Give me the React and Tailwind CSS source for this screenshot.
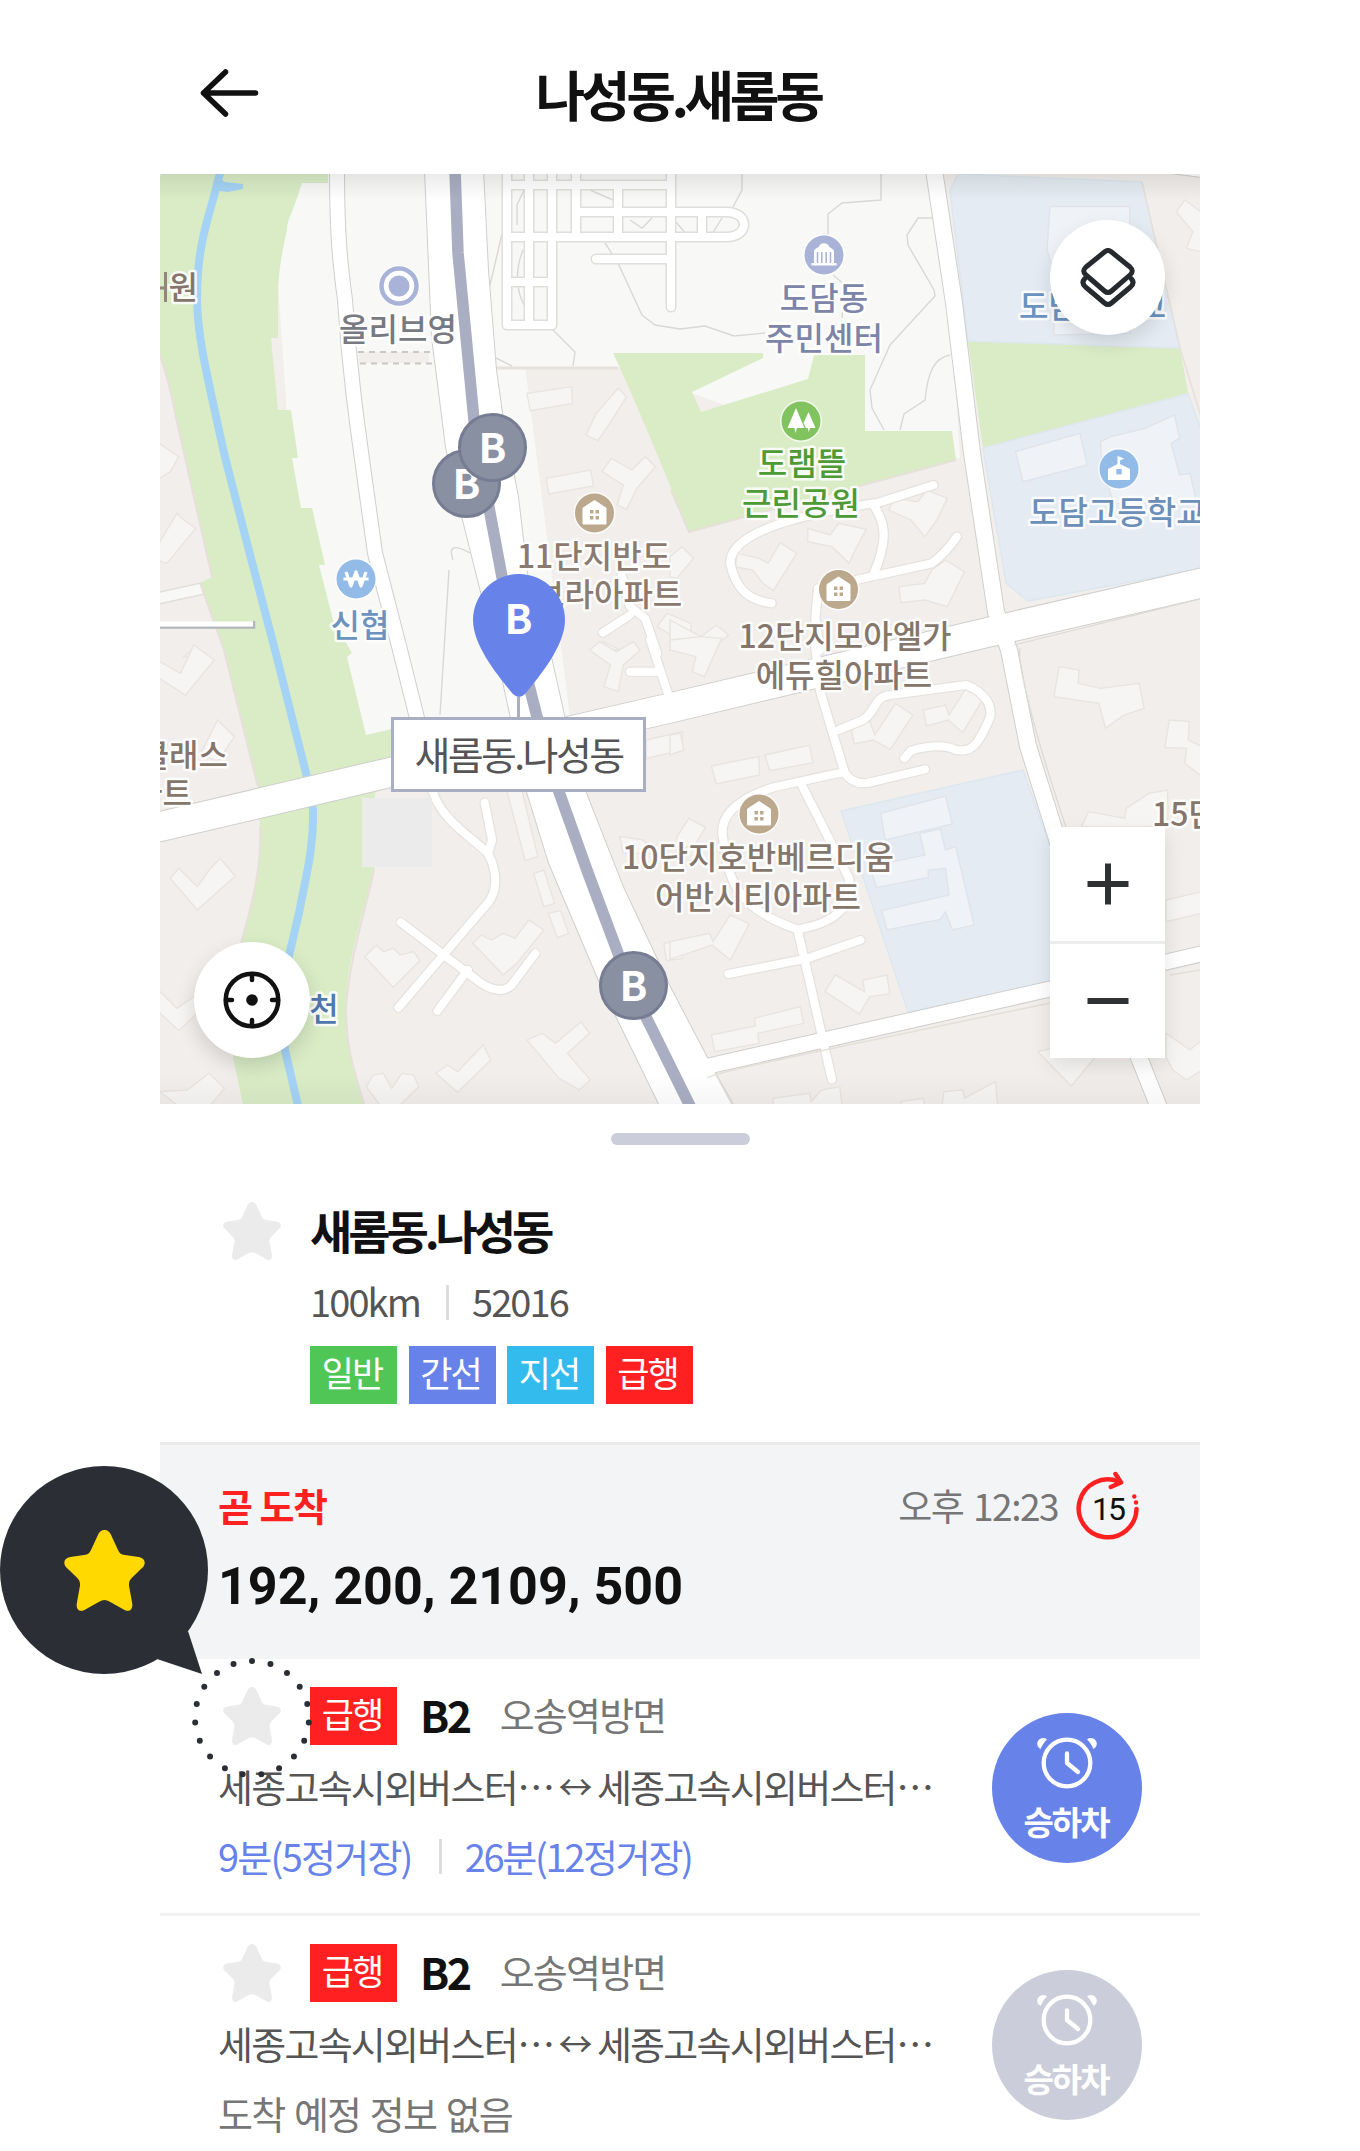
import React from "react";

const KR = "font-['Noto_Sans_CJK_KR',sans-serif]";

function Star({ className }) {
  return (
    <svg viewBox="42 60 240 242" className={className} fill="currentColor">
      <path d="M162 60C172 60 178 66 182 76L201 117C207 130 211 133 223 135L264 141C281 144 287 156 278 170L244 203C237 210 235 215 235 225L245 280C247 298 236 306 222 299L178 274C167 268 157 268 146 274L102 299C88 306 77 298 79 280L89 225C89 215 87 210 80 203L46 170C37 156 43 144 60 141L101 135C113 133 117 130 123 117L142 76C146 66 152 60 162 60Z" />
    </svg>
  );
}

/* Map quadrants are drawn at three times their size on the page. */
const TILE = {
  nw: "translate(150 170) scale(0.33806 0.33333)",
  ne: "translate(670 170) scale(0.34438 0.33333)",
  sw: "translate(150 640) scale(0.33806 0.33333)",
  se: "translate(670 640) scale(0.34438 0.33333)",
};

const BUILDINGS = {
  nw: [
    "M1115 670 1247 650 1250 700 1125 722Z",
    "M1385 655 1410 680 1360 760 1325 812 1290 795 1320 730Z",
    "M1172 925 1303 900 1312 948 1180 972Z",
    "M1365 865 1425 900 1465 860 1495 890 1440 955 1410 1018 1382 1005 1400 945 1337 905Z",
    "M20 815 85 860 60 905 20 930Z",
    "M80 1030 100 1050 135 1075 50 1180 20 1170 20 1130Z",
    "M1500 1370 1530 1330 1600 1360 1600 1430Z",
    "M1310 1440 1340 1415 1390 1440Z",
    "M100 1460 135 1430 165 1460Z",
  ],
  ne: [
    "M400 1075 465 1095 490 1060 570 1078 535 1145 520 1180 470 1130 400 1115Z",
    "M635 1020 650 985 720 995 745 960 805 985 775 1050 740 1100 700 1050Z",
    "M195 1150 260 1165 285 1180 320 1118 368 1150 300 1262 270 1240 240 1200 190 1190Z",
    "M665 1250 740 1240 760 1200 800 1170 855 1205 805 1310 740 1290 670 1298Z",
    "M0 1160 35 1130 68 1165 20 1225 0 1220Z",
    "M0 1350 90 1400 135 1365 170 1395 120 1440 0 1440Z",
    "M1495 90 1560 140 1560 250 1500 235 1518 185 1470 125Z",
  ],
  sw: [
    "M20 60 90 100 130 15 190 60 105 165 20 110Z",
    "M200 240 250 290 200 365 150 340Z",
    "M60 715 85 685 140 740 175 690 208 655 252 708 140 810Z",
    "M20 1045 80 1105 130 1070 150 1110 85 1172 20 1110Z",
    "M30 1355 110 1350 175 1300 220 1345 180 1395 80 1395Z",
    "M635 950 670 915 690 935 720 925 740 945 780 935 798 962 720 1042Z",
    "M955 910 980 885 1010 900 1045 880 1080 895 1120 840 1165 870 1085 970 1045 1005Z",
    "M1055 450 1100 450 1147 650 1110 662Z",
    "M1135 700 1165 690 1197 790 1165 800Z",
    "M1178 820 1215 812 1238 880 1205 893Z",
    "M1115 1200 1160 1180 1200 1210 1275 1145 1300 1180 1235 1240 1303 1320 1270 1350 1210 1315Z",
    "M845 1300 880 1275 910 1295 985 1215 1008 1260 910 1357Z",
    "M640 1340 660 1305 690 1300 715 1345 745 1300 780 1305 795 1340 740 1395 680 1395Z",
    "M1300 30 1330 5 1380 35 1430 5 1450 30 1400 75 1385 155 1343 140 1362 75Z",
    "M1520 910 1575 900 1575 955 1528 962Z",
    "M1468 300 1575 275 1575 330 1468 355Z",
    "M1390 590 1460 600 1500 640 1400 640Z",
  ],
  se: [
    "M0 0 90 -10 150 -5 100 110 65 95 75 50 0 30Z",
    "M0 285 30 280 40 330 0 345Z",
    "M120 378 258 350 260 405 135 432Z",
    "M275 345 405 315 415 368 290 392Z",
    "M20 590 55 535 103 562 70 620 20 620Z",
    "M525 260 580 245 595 285 655 190 705 225 640 328 590 300 535 312Z",
    "M735 210 800 195 810 225 860 145 910 175 850 278 808 240 745 258Z",
    "M1130 80 1188 90 1185 130 1250 145 1362 130 1377 205 1318 225 1265 265 1245 190 1115 170Z",
    "M1450 240 1508 245 1505 300 1545 320 1545 410 1495 370 1500 325 1437 322Z",
    "M1195 560 1215 515 1320 535 1325 505 1390 460 1445 450 1445 560Z",
    "M0 905 115 880 125 905 175 825 230 852 175 960 122 915 0 958Z",
    "M450 1055 480 1005 565 1055 560 1020 630 1005 638 1062 580 1070 550 1122Z",
    "M120 1185 248 1158 245 1135 378 1100 388 1150 255 1180 258 1210 130 1235Z",
    "M1068 1235 1110 1225 1130 1245 1240 1245 1165 1338Z",
    "M300 1400 300 1375 405 1360 410 1385 440 1350 493 1340 500 1400Z",
    "M790 1400 795 1355 850 1350 855 1375 945 1325 952 1400Z",
    "M670 1400 670 1385 735 1375 740 1400Z",
    "M1440 780 1545 755 1545 820 1440 845Z",
    "M1440 1180 1510 1230 1545 1200 1545 1290 1500 1320 1460 1290 1440 1250Z",
  ],
};

const SCHOOLS = {
  ne: [
    "M1103 110 1335 110 1335 490 1115 495 1112 300 1095 240Z",
    "M1003 845 1190 790 1212 885 1025 935Z",
    "M1250 815 1280 800 1380 775 1465 735 1480 805 1455 820 1480 915 1510 910 1530 1000 1290 1000 1255 900Z",
  ],
  se: [
    "M612 520 800 468 820 552 625 600Z",
    "M725 580 785 567 800 630 830 620 883 855 820 870 800 815 785 838 630 870 615 812 810 765 800 685 750 690 750 712 600 742 580 680 740 645Z",
  ],
};

const ALLEYS = {
  nw: ["M1395 1215 1420 1310 1465 1345 1500 1450", "M1340 1388 1420 1335"],
  ne: [
    "M765 945 590 1003C620 1050 640 1100 590 1215",
    "M590 1000C400 1030 175 1080 175 1180C190 1250 220 1290 295 1300",
    "M540 1230 760 1180C800 1150 820 1120 833 1100",
    "M430 1255 422 1345 435 1440",
  ],
  sw: [
    "M835 450C860 540 950 590 1000 640C1030 700 1030 760 990 800L735 1103",
    "M990 488 1012 600 1000 640",
    "M742 847 980 1030C1020 1055 1050 1055 1070 1035L1140 940",
    "M940 990 850 1113",
    "M1480 0 1535 170",
    "M1420 95 1505 95",
  ],
  se: [
    "M420 0 435 150 508 400C530 430 560 435 590 425L740 388",
    "M490 270 560 240C600 215 590 170 640 165L860 135C920 160 935 200 930 230C890 330 870 335 830 330C790 310 740 320 700 332L680 355",
    "M500 397 300 442C180 480 140 540 155 600C165 720 200 810 370 868C480 850 530 800 520 715L385 440",
    "M370 868 400 1000 470 1318",
    "M170 1002 400 955 553 900",
  ],
};

const LOT =
  "M507 170V325H552V170M529 170V325M576 170V237M618 185V237M671 170V307M507 185H666M576 212H726C750 212 750 237 726 237H507M507 282H552M596 259H671M702 212V237";

const ROADS = [
  ["M337 170C337 240 341 270 345 300C350 380 358 430 375 553L400 650 418 722", 14],
  ["M934 170 954 303 972 453 996 612 1009 650 1028 746 1058 842 1100 960 1160 1110", 16],
  ["M704 1067 1050 989 1205 953", 15],
  ["M150 829 392 772 670 708 1002 629 1210 581", 29],
];

const MAIN_ROAD =
  "M425 170 432 337 446 447 463 520 481 592 502 677 527 792 549 863 600 983 662 1110H736L715 1073 670 987 623 887 586 793 564 715 551 657 527 573 518 497 502 413 496 370 488 270 483 170Z";

const LABELS = [
  ["원", 198, 299, "end", "#85766c"],
  ["올리브영", 398, 341, "middle", "#777a80"],
  ["도담동", 824, 310, "middle", "#7c85a8"],
  ["주민센터", 824, 350, "middle", "#7c85a8"],
  ["도램뜰", 802, 475, "middle", "#4d9a37"],
  ["근린공원", 801, 515, "middle", "#4d9a37"],
  ["도담중학교", 1019, 318, "start", "#6b93c0"],
  ["도담고등학교", 1029, 524, "start", "#6b8fb8"],
  ["11단지반도", 594, 568, "middle", "#8b7a70"],
  ["유보라아파트", 594, 606, "middle", "#8b7a70"],
  ["신협", 360, 637, "middle", "#6b93bd"],
  ["12단지모아엘가", 845, 648, "middle", "#85766c"],
  ["에듀힐아파트", 844, 687, "middle", "#85766c"],
  ["10단지호반베르디움", 758, 869, "middle", "#85766c"],
  ["어반시티아파트", 758, 909, "middle", "#85766c"],
  ["15단지", 1152, 826, "start", "#85766c"],
  ["클래스", 228, 767, "end", "#85766c"],
  ["아파트", 192, 805, "end", "#85766c"],
  ["천", 324, 1021, "middle", "#5078ad"],
];

function HousePoi({ x, y }) {
  return (
    <g transform={`translate(${x} ${y})`}>
      <circle r="21" fill="#fff" fillOpacity=".8" />
      <circle r="19.5" fill="#bba88d" />
      <path d="M-11.5 11V-5L0-12.5 11.5-5V11Z" fill="#fff" stroke="#fff" strokeWidth="1" strokeLinejoin="round" />
      <path d="M-4.5-3h3.4v3.4h-3.4zM1.1-3h3.4v3.4h-3.4zM-4.5 3h3.4v3.4h-3.4zM1.1 3h3.4v3.4h-3.4z" fill="#bba88d" />
    </g>
  );
}

function MapDrawing() {
  return (
    <svg viewBox="160 174 1040 930" className="block h-[930px] w-[1040px]">
      <defs>
        <linearGradient id="topShade" x1="0" y1="0" x2="0" y2="1">
          <stop offset="0" stopColor="#000" stopOpacity=".08" />
          <stop offset="1" stopColor="#000" stopOpacity="0" />
        </linearGradient>
        <linearGradient id="bottomShade" x1="0" y1="0" x2="0" y2="1">
          <stop offset="0" stopColor="#000" stopOpacity="0" />
          <stop offset="1" stopColor="#000" stopOpacity=".035" />
        </linearGradient>
      </defs>
      <rect x="160" y="174" width="1040" height="930" fill="#f1eeeb" />
      <path d="M270 170H500L570 716 366 738 300 600Z" fill="#f8f8f6" />
      <path d="M480 170H942L960 458 865 455 618 367H490Z" fill="#f8f8f6" />
      <path d="M496 368H618" stroke="#e6e1dc" strokeWidth="3" />
      <path d="M155 599 205 588" stroke="#e0ddd9" strokeWidth="13" />
      <path d="M155 599 205 588" stroke="#f8f8f6" strokeWidth="10" />

      <g stroke="#e6e0d9" strokeWidth="2">
        <path
          d="M163 170H328V183H302C294 210 287 220 287 230C280 260 278 280 278 297V338H271L278 410H291L298 458H292L301 508H312L325 565H319L333 620 352 653 347 657 366 735 396 728V757L375 793 374 868 366 900C352 950 346 980 346 1007C346 1040 350 1060 366 1110H244L233 1057 241 943C255 895 262 860 260 827L258 787 224 650 200 583 212 577 175 413C170 385 162 365 155 345V190Z"
          fill="#d9ecc6"
          stroke="none"
        />
        <path d="M160 353C168 380 172 395 175 413L212 577 M200 583 224 650 258 787M260 827C262 860 255 895 241 943" fill="none" />
        <path d="M374 868C372 890 350 950 346 1007C346 1040 350 1060 366 1110" fill="none" />
        <path d="M613 353H763V358L692 392 701 412 808 379 814 355H865V431H952L956 460 689 532C680 510 640 410 613 353Z" fill="#d9ecc6" stroke="none" />
        <path d="M956 460 689 532 671 490" fill="none" />
        <path d="M968 341 1180 348 1188 393 983 448Z" fill="#d9ecc6" stroke="none" />
      </g>
      <g fill="#e4ebf2" stroke="#dde7ef" strokeWidth="1.500">
        <path d="M950 190 958 174 1142 182 1180 348 968 341Z" />
        <path d="M983 448 1188 394 1205 440V568L1028 601 1006 583Z" />
        <path d="M841 811 1023 770 1050 847V982L908 1012Z" />
      </g>
      <path d="M1180 348 1205 430M1142 182 1180 348" stroke="#e6e0d9" strokeWidth="1.500" fill="none" />

      <g fill="none" stroke="#d9d8d6" strokeWidth="1.400">
        <path d="M881 170V200L842 203 828 214V235" />
        <path d="M742 170V190L733 207M933 218H918L907 235 908 245 934 290 935 296 890 345 870 390 872 408 884 430M950 355C935 358 928 370 925 400L904 414 900 430" />
        <path d="M605 243 618 263 642 315 655 325 680 329 705 326 734 336 765 333" />
        <path d="M551 328 575 352 573 366M496 358 512 366M502 234 490 285M453 560C448 545 455 545 470 553M449 570 440 715" />
        <path d="M833 275 845 285 842 318" />
        <path d="M524 190 517 205V225M523 250C515 270 516 290 524 305" />
        <path d="M590 190 613 200M630 220 642 228 652 218M676 222 686 234M722 218 712 234" />
      </g>

      <path d="M222 166 214 196C206 225 197 250 197 300C198 340 206 370 224 453L248 547 275 650 307 777 313 810C314 850 305 880 299 913L288 960C282 1000 283 1030 285 1050L299 1110" fill="none" stroke="#a5d3f5" strokeWidth="8" />
      <path d="M215 176 225 182 243 184V189L228 192 212 190Z" fill="#a5d3f5" />

      {Object.entries(BUILDINGS).map(([tile, list]) => (
        <g key={tile} transform={TILE[tile]} fill="#f6f5f3" stroke="#e8e4e0" strokeWidth="4">
          {list.map((d) => (
            <path key={d} d={d} />
          ))}
        </g>
      ))}
      {Object.entries(SCHOOLS).map(([tile, list]) => (
        <g key={tile} transform={TILE[tile]} fill="#eff2f7" stroke="#dfe4ea" strokeWidth="4">
          {list.map((d) => (
            <path key={d} d={d} />
          ))}
        </g>
      ))}

      <g fill="none" strokeLinecap="round" strokeLinejoin="round">
        {Object.entries(ALLEYS).map(([tile, list]) => (
          <g key={tile} transform={TILE[tile]} stroke="#e5e1dd" strokeWidth="31">
            {list.map((d) => (
              <path key={d} d={d} />
            ))}
          </g>
        ))}
        <path d={LOT} stroke="#e0deda" strokeWidth="11" />
        {ROADS.map(([d, w]) => (
          <path key={d} d={d} stroke="#cfcfcd" strokeWidth={w + 2} />
        ))}
        <path d={MAIN_ROAD} fill="#fff" stroke="#cfcfcd" strokeWidth="2" />
        {Object.entries(ALLEYS).map(([tile, list]) => (
          <g key={tile} transform={TILE[tile]} stroke="#fff" strokeWidth="24">
            {list.map((d) => (
              <path key={d} d={d} />
            ))}
          </g>
        ))}
        <path d={LOT} stroke="#fff" strokeWidth="8" />
        {ROADS.map(([d, w]) => (
          <path key={d} d={d} stroke="#fff" strokeWidth={w} />
        ))}
      </g>
      <path d={MAIN_ROAD} fill="#fff" />
      <path d="M1145 170 1205 178V170Z" fill="#fff" stroke="#cfcfcd" />
      <path d="M707 1078C712 1072 850 1045 1050 1003M715 1073 735 1110M1170 975 1200 970" fill="none" stroke="#e4dfd8" strokeWidth="1.500" />
      <path d="M1020 648C1017 660 1030 720 1066 827M1014 645 1200 599" fill="none" stroke="#dcd9d4" strokeWidth="1.200" />
      <path d="M455 170 458 253 474 420 490 513 502 577 520 650 536 713 559 792 588 873 618 953 645 1015 692 1110" fill="none" stroke="#a9aec2" strokeWidth="11.500" />

      <rect x="359" y="352" width="70" height="11" fill="#f1eeeb" />
      <path d="M358 352H430M360 363.500H432" stroke="#c9c8c6" strokeWidth="2" strokeDasharray="6 5" />
      <rect x="362" y="798" width="70" height="69" fill="#ebebeb" />
      <path d="M160 627.500H254V621" fill="none" stroke="#b3b5bd" strokeWidth="2.500" />
      <path d="M160 624H253" stroke="#fff" strokeWidth="5" />

      <g>
        <circle cx="399" cy="286" r="21" fill="#fff" fillOpacity=".8" />
        <circle cx="399" cy="286" r="17.500" fill="#fff" stroke="#a9b3d8" strokeWidth="4.500" />
        <circle cx="399" cy="286" r="10.500" fill="#a9b3d8" />
      </g>
      <g transform="translate(824 255)">
        <circle r="21" fill="#fff" fillOpacity=".8" />
        <circle r="19.500" fill="#a9b3d8" />
        <path d="M-10-4C-9-7-5-7-4.500-9.500C-3-12.500 3-12.500 4.500-9.500C5-7 9-7 10-4V8H12.500V10.500H-12.500V8H-10Z" fill="#fff" />
        <path d="M-6.500-3V8M-2.200-3V8M2.200-3V8M6.500-3V8" stroke="#a9b3d8" strokeWidth="1.500" />
      </g>
      <g transform="translate(801 421)">
        <circle r="21" fill="#fff" fillOpacity=".7" />
        <circle r="19.500" fill="#80c35f" />
        <path d="M-5-13-13.500 7H-6.500L-5.500 12-4 7H3.500ZM7.500-9 2.500 2 5 7H6.700L7.700 11 9 7H14.500Z" fill="#fff" />
      </g>
      <g transform="translate(1119 469)">
        <circle r="21" fill="#fff" fillOpacity=".7" />
        <circle r="19.500" fill="#93bbe8" />
        <path d="M-11 11V0L-1.500-5V-13L5-10.500 1-8.500V-5L11 0V11Z" fill="#fff" />
        <rect x="-2.700" y="0" width="5.400" height="5.400" fill="#93bbe8" />
      </g>
      <g transform="translate(356 579)">
        <circle r="21" fill="#fff" fillOpacity=".7" />
        <circle r="19.500" fill="#93bbe8" />
        <path d="M-10-7-5 7 0-7 5 7 10-7M-12.500 0H12.500" fill="none" stroke="#fff" strokeWidth="3.200" strokeLinejoin="round" />
      </g>
      <HousePoi x="594.500" y="513" />
      <HousePoi x="838.500" y="589.500" />
      <HousePoi x="759" y="814" />

      <g className={KR} fontSize="32" fontWeight="500" stroke="#fff" strokeOpacity=".85" strokeWidth="5" strokeLinejoin="round" paintOrder="stroke">
        {LABELS.map(([t, x, y, anchor, fill]) => (
          <text key={t} x={x} y={y} textAnchor={anchor} fill={fill}>
            {t}
          </text>
        ))}
        <path d="M160 288H165M165.500 272V302" stroke="#85766c" strokeWidth="3" />
      </g>
      <rect x="160" y="174" width="1040" height="26" fill="url(#topShade)" />
      <rect x="160" y="1074" width="1040" height="30" fill="url(#bottomShade)" />
    </svg>
  );
}

function BusStop({ className }) {
  return (
    <div
      className={`${KR} absolute flex size-[69px] items-center justify-center rounded-full border-[3px] border-[#767d92] bg-[#8990a1] text-[41px] leading-none font-bold text-white ${className}`}
    >
      <span className="-mt-[4px]">B</span>
    </div>
  );
}

function MapPanel() {
  return (
    <section className="relative h-[930px] w-[1040px] overflow-hidden">
      <MapDrawing />
      <BusStop className="top-[274.500px] left-[272px]" />
      <BusStop className="top-[239px] left-[298px]" />
      <BusStop className="top-[777px] left-[439px]" />

      <div className="absolute top-[400px] left-[231px] flex w-[255px] flex-col items-center">
        <div className="relative flex h-[123px] w-[92px] justify-center">
          <svg viewBox="0 0 92 123" className="absolute inset-0 size-full">
            <path d="M46 0A46 46 0 0 1 92 46C92 72 66 103 52 120Q46 126 40 120C26 103 0 72 0 46A46 46 0 0 1 46 0Z" fill="#6783ea" />
          </svg>
          <span className={`${KR} relative mt-[22px] text-[41px] leading-none font-bold text-white`}>B</span>
        </div>
        <div className="h-5 w-[3px] bg-[#a9aec2]" />
        <div className={`${KR} flex h-[75px] w-full items-center justify-center border-[3px] border-[#a9aec2] bg-white text-[39px] leading-none tracking-[-2.600px] text-[#555]`}>
          <span className="-mt-[3px]">새롬동.나성동</span>
        </div>
      </div>

      <button className="absolute top-[46px] right-[35px] flex size-[115px] items-center justify-center rounded-full bg-white shadow-[0_8px_20px_rgba(0,0,0,0.12)]">
        <svg viewBox="0 0 56 60" className="h-[60px] w-[56px]" fill="none" stroke="#26292d" strokeWidth="5" strokeLinejoin="round" strokeLinecap="round">
          <path d="M24.500 4Q28 1 31.500 4L50 19Q54.500 23 50 27L31.500 43Q28 46 24.500 43L6 27Q1.500 23 6 19Z" />
          <path d="M4.500 31Q1 35 5.500 39L24.500 55Q28 58 31.500 55L50.500 39Q55 35 51.500 31" />
        </svg>
      </button>

      <button className="absolute bottom-[46px] left-[34px] flex size-[116px] items-center justify-center rounded-full bg-white shadow-[0_8px_20px_rgba(0,0,0,0.14)]">
        <svg viewBox="0 0 58 58" className="size-[58px]" fill="none" stroke="#111" strokeWidth="4.500" strokeLinecap="round">
          <circle cx="29" cy="29" r="26.300" />
          <path d="M29 3V9M29 49V55M3 29H9M49 29H55" />
          <circle cx="29" cy="29" r="5.800" fill="#111" stroke="none" />
        </svg>
      </button>

      <div className="absolute right-[35px] bottom-[46px] flex w-[115px] flex-col bg-white shadow-[0_8px_20px_rgba(0,0,0,0.10)]">
        <button className="flex h-[114px] items-center justify-center">
          <svg viewBox="0 0 42 42" className="size-[42px]" stroke="#2f3133" strokeWidth="6">
            <path d="M.500 21H41.500M21 .500V41.500" />
          </svg>
        </button>
        <div className="h-[3px] bg-[#ececec]" />
        <button className="flex h-[114px] items-center justify-center">
          <svg viewBox="0 0 42 42" className="size-[42px]" stroke="#2f3133" strokeWidth="6">
            <path d="M.500 21H41.500" />
          </svg>
        </button>
      </div>
    </section>
  );
}

function Tag({ children, className }) {
  return (
    <div className={`flex h-[58px] w-[87px] items-center justify-center text-[35px] leading-none tracking-[-2px] text-white ${className}`}>
      <span className="-mt-[7px] -ml-[3px]">{children}</span>
    </div>
  );
}

function AlarmButton({ className }) {
  return (
    <button className={`flex size-[150px] shrink-0 flex-col items-center rounded-full text-white ${className}`}>
      <svg viewBox="0 0 60 52" className="mt-[24px] h-[52px] w-[60px]" fill="none" stroke="currentColor" strokeWidth="4.300" strokeLinecap="round" strokeLinejoin="round">
        <circle cx="30" cy="26" r="23.300" />
        <path d="M30 16.500V26L41 35" />
        <path d="M.200 6.500A6 6 0 0 1 10 2.500C7 5 5.500 8 3.500 12C1.500 11 .200 9 .200 6.500ZM59.800 6.500A6 6 0 0 0 50 2.500C53 5 54.500 8 56.500 12C58.500 11 59.800 9 59.800 6.500Z" fill="currentColor" stroke="none" />
      </svg>
      <span className="mt-[16px] -ml-[2px] text-[33px] leading-none font-bold tracking-[-2px]">승하차</span>
    </button>
  );
}

function Divider({ className }) {
  return <span className={`h-[35px] w-[3px] bg-[#ddd] ${className}`} />;
}

function RouteRow({ children, active }) {
  return (
    <li className="flex h-[254px] justify-between pr-[58px] pl-[58px]">
      <div className="flex flex-col pt-[28px]">
        <div className="flex h-[58px] items-center">
          <Star className="ml-[5px] size-[58px] text-[#ebebeb]" />
          <Tag className="ml-[29px] bg-[#ff2121]">급행</Tag>
          <span className="-mt-[4px] ml-[23px] text-[43px] leading-none font-bold tracking-[-2.500px] text-[#111]">B2</span>
          <span className="-mt-[4px] ml-[30px] text-[38px] leading-none tracking-[-1.800px] text-[#767676]">오송역방면</span>
        </div>
        <div className="mt-[22px] flex h-[38px] items-center text-[38px] leading-none tracking-[-1.750px] whitespace-nowrap text-[#555]">
          <span>세종고속시외버스터</span>
          <span className="flex w-[37px] justify-center">⋯</span>
          <span className="flex w-[43px] justify-center text-[34px] tracking-normal">↔</span>
          <span>세종고속시외버스터</span>
          <span className="flex w-[37px] justify-center">⋯</span>
        </div>
        <div className="mt-[32px] flex h-[38px] items-center text-[38px] leading-none tracking-[-1.750px] whitespace-nowrap">{children}</div>
      </div>
      <AlarmButton className={active ? "mt-[54px] bg-[#6783ea]" : "mt-[54px] bg-[#cbceda]"} />
    </li>
  );
}

function RefreshTimer() {
  return (
    <div className="relative flex h-[70px] w-[64px] items-center justify-center">
      <svg viewBox="0 0 64 70" className="absolute inset-0 size-full" fill="none" stroke="#ff2121" strokeWidth="4.500" strokeLinecap="round" strokeLinejoin="round">
        <path d="M42.500 10.600A28.900 28.900 0 1 0 60.500 38" />
        <path d="M39.500 3 45 11.500 34.800 16" />
        <path d="M58.300 25.500V25.510M60 31.500V31.510" />
      </svg>
      <span className="relative mt-[5px] font-[Roboto,sans-serif] text-[32px] leading-none tracking-[-2px] text-[#111]">15</span>
    </div>
  );
}

export default function App() {
  return (
    <div className={`${KR} relative h-[2151px] w-[1360px] overflow-hidden bg-white`}>
      <main className="mx-auto flex w-[1040px] flex-col">
        <header className="grid h-[174px] grid-cols-[120px_1fr_120px] items-center pt-[14px]">
          <button className="-mt-[2px] ml-[40px]">
            <svg viewBox="0 0 60 48" className="h-[48px] w-[60px]" fill="none" stroke="#111" strokeWidth="5.500" strokeLinecap="round" strokeLinejoin="round">
              <path d="M25.500 3 3.500 24 25.500 45M3.500 24H55.500" />
            </svg>
          </button>
          <h1 className="-ml-[4px] text-center text-[54px] leading-none font-bold tracking-[-4.400px] text-[#111]">나성동.새롬동</h1>
        </header>

        <MapPanel />

        <section className="flex h-[338px] flex-col">
          <div className="mx-auto mt-[29px] h-[12px] w-[139px] rounded-[6px] bg-[#cbceda]" />
          <div className="mt-[56px] flex">
            <Star className="mt-[1px] ml-[63px] size-[58px] text-[#ebebeb]" />
            <div className="ml-[29px] flex flex-col">
              <h2 className="mt-[6px] text-[46px] leading-[44px] font-bold tracking-[-4.100px] text-[#111]">새롬동.나성동</h2>
              <div className="mt-[34px] flex h-[35px] items-center text-[38px] leading-none tracking-[-1.900px] text-[#555]">
                <span className="-mt-[4px]">100km</span>
                <Divider className="ml-[26px]" />
                <span className="-mt-[4px] ml-[23px]">52016</span>
              </div>
              <div className="mt-[26px] flex gap-[11.500px]">
                <Tag className="bg-[#50c657]">일반</Tag>
                <Tag className="bg-[#6783ea]">간선</Tag>
                <Tag className="bg-[#33bbee]">지선</Tag>
                <Tag className="bg-[#ff2121]">급행</Tag>
              </div>
            </div>
          </div>
        </section>

        <section className="flex h-[217px] flex-col border-t-[3px] border-[#e9e9e9] bg-[#f3f4f6] pr-[60px] pl-[58px]">
          <div className="mt-[26px] flex h-[70px] items-center justify-between">
            <span className="-mt-[2px] text-[38px] leading-none font-bold tracking-[-1.500px] text-[#ff2121] [word-spacing:1px]">곧 도착</span>
            <div className="flex items-center">
              <span className="-mt-[2px] mr-[18px] text-[37px] leading-none tracking-[-1.500px] text-[#767676] [word-spacing:3px]">오후 12:23</span>
              <RefreshTimer />
            </div>
          </div>
          <p className="mt-[20px] font-[Roboto,sans-serif] text-[52px] leading-none font-bold text-[#111]">192, 200, 2109, 500</p>
        </section>

        <ul>
          <RouteRow active>
            <span className="text-[#6783ea]">9분(5정거장)</span>
            <Divider className="ml-[27px]" />
            <span className="ml-[23px] tracking-[-2.300px] text-[#6783ea]">26분(12정거장)</span>
          </RouteRow>
          <li className="h-[3px] bg-[#f2f2f2]" />
          <RouteRow>
            <span className="text-[#767676] [word-spacing:2.700px]">도착 예정 정보 없음</span>
          </RouteRow>
        </ul>
      </main>

      <div className="absolute top-[1466px] left-0 h-[208px] w-[208px]">
        <svg viewBox="0 0 208 208" className="absolute inset-0 size-full" fill="#2b2e34">
          <circle cx="104" cy="104" r="104" />
          <path d="M157 193 202 208 188 165Z" />
        </svg>
        <Star className="absolute top-[64px] left-[64px] size-[81px] text-[#ffd900]" />
      </div>
      <svg viewBox="0 0 120 120" className="absolute top-[1658px] left-[192px] size-[120px]" fill="none">
        <circle cx="60" cy="60" r="57" pathLength="19" transform="rotate(-90 60 60)" stroke="#2b2e34" strokeWidth="6" strokeLinecap="round" strokeDasharray="0 1" />
      </svg>
    </div>
  );
}
